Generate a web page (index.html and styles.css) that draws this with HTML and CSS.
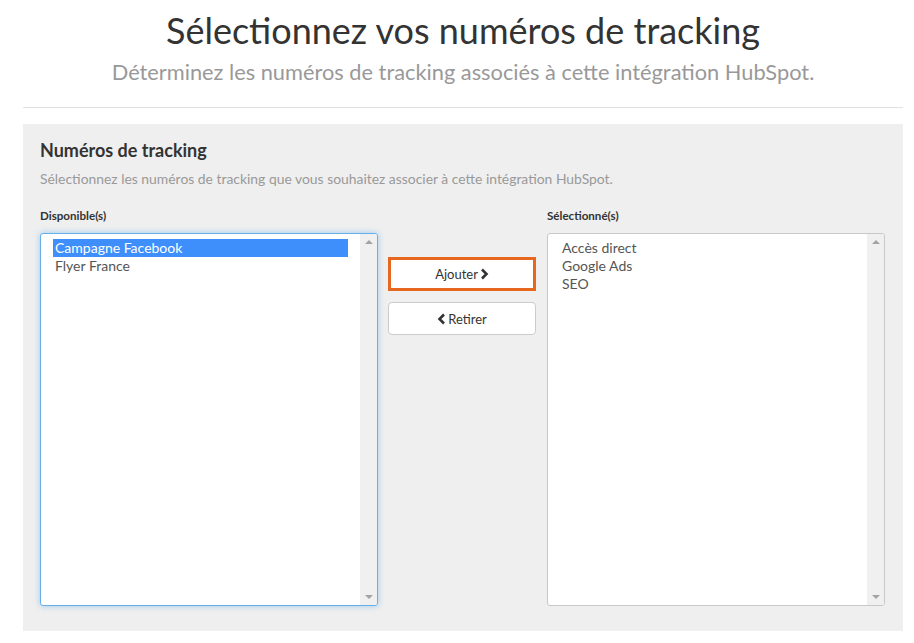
FILE: index.html
```html
<!DOCTYPE html>
<html lang="fr">
<head>
<meta charset="utf-8">
<title>Numéros de tracking</title>
<link rel="stylesheet" href="styles.css">
</head>
<body>
<header class="page-head">
  <h1 class="title">Sélectionnez vos numéros de tracking</h1>
  <p class="subtitle">Déterminez les numéros de tracking associés à cette intégration HubSpot.</p>
</header>
<hr class="divider">
<section class="panel">
  <h2 class="panel-title">Numéros de tracking</h2>
  <p class="panel-desc">Sélectionnez les numéros de tracking que vous souhaitez associer à cette intégration HubSpot.</p>
  <div class="dual">
    <div class="col">
      <div class="label">Disponible(s)</div>
      <div class="listbox focused">
        <ul class="options">
          <li class="opt selected">Campagne Facebook</li>
          <li class="opt">Flyer France</li>
        </ul>
        <div class="scroll"><span class="arr up"></span><span class="arr down"></span></div>
      </div>
    </div>
    <div class="actions">
      <button class="btn btn-add">Ajouter<svg class="chev" viewBox="0 0 8 12" width="9" height="12"><path d="M1.5 1.5 L6 6 L1.5 10.5" fill="none" stroke="#333" stroke-width="2.6"/></svg></button>
      <button class="btn"><svg class="chev" viewBox="0 0 8 12" width="9" height="12"><path d="M6.5 1.5 L2 6 L6.5 10.5" fill="none" stroke="#333" stroke-width="2.6"/></svg>Retirer</button>
    </div>
    <div class="col">
      <div class="label">Sélectionné(s)</div>
      <div class="listbox">
        <ul class="options">
          <li class="opt">Accès direct</li>
          <li class="opt">Google Ads</li>
          <li class="opt">SEO</li>
        </ul>
        <div class="scroll"><span class="arr up"></span><span class="arr down"></span></div>
      </div>
    </div>
  </div>
</section>
</body>
</html>
```
FILE: styles.css
```css
* { box-sizing: border-box; }
html, body { margin: 0; padding: 0; background: #fff; }
body {
  font-family: Lato, "Open Sans", "Liberation Sans", sans-serif;
  color: #333;
  padding: 0 11px 0 23px;
}
.page-head { text-align: center; padding-top: 8px; }
.title {
  margin: 0;
  font-size: 36px;
  font-weight: 400;
  line-height: 44px;
  color: #333;
}
.subtitle {
  margin: 6px 0 0;
  font-size: 21.8px;
  line-height: 28px;
  color: #999;
}
.divider {
  margin: 21px 0 0;
  border: 0;
  border-top: 1px solid #e1e1e1;
  height: 0;
}
.panel {
  margin-top: 16px;
  background: #efefef;
  padding: 14px 18px 25px 17px;
}
.panel-title {
  margin: 0;
  font-size: 18px;
  font-weight: 700;
  line-height: 24px;
  color: #333;
}
.panel-desc {
  margin: 7px 0 0;
  font-size: 13.9px;
  line-height: 20px;
  color: #999;
}
.dual {
  display: flex;
  margin-top: 20px;
}
.col { width: 338px; flex: none; }
.label {
  font-size: 11.6px;
  font-weight: 700;
  line-height: 14px;
  color: #333;
  margin-bottom: 10px;
}
.listbox {
  display: flex;
  height: 373px;
  background: #fff;
  border: 1px solid #c8c8c8;
  border-radius: 3px;
  overflow: hidden;
}
.listbox.focused {
  border-color: #66afe9;
  box-shadow: 0 0 6px rgba(102, 175, 233, 0.6);
}
.options {
  list-style: none;
  margin: 0;
  padding: 5px 12px 0 12px;
  flex: 1;
}
.opt {
  font-size: 14px;
  line-height: 18px;
  padding: 0 2px;
  color: #555;
  white-space: nowrap;
}
.opt.selected { background: #3e8ffb; color: #fff; }
.scroll {
  width: 17px;
  flex: none;
  background: #f0f0f0;
  display: flex;
  flex-direction: column;
  justify-content: space-between;
  align-items: center;
  padding: 6px 0 6px;
}
.arr {
  width: 0; height: 0;
  border-left: 4px solid transparent;
  border-right: 4px solid transparent;
}
.arr.up { border-bottom: 4px solid #a3a3a3; }
.arr.down { border-top: 4px solid #a3a3a3; }
.actions {
  width: 169px;
  flex: none;
  padding: 48px 11px 0 10px;
  display: flex;
  flex-direction: column;
  gap: 11px;
}
.btn {
  font-family: inherit;
  font-size: 13px;
  color: #333;
  background: #fff;
  border: 1px solid #ccc;
  border-radius: 4px;
  height: 33px;
  width: 148px;
  display: flex;
  align-items: center;
  justify-content: center;
  gap: 2px;
  padding: 0;
}
.btn-add {
  border: 3px solid #e6671e;
  border-radius: 0;
  height: 34px;
}
.chev { display: block; }
```
